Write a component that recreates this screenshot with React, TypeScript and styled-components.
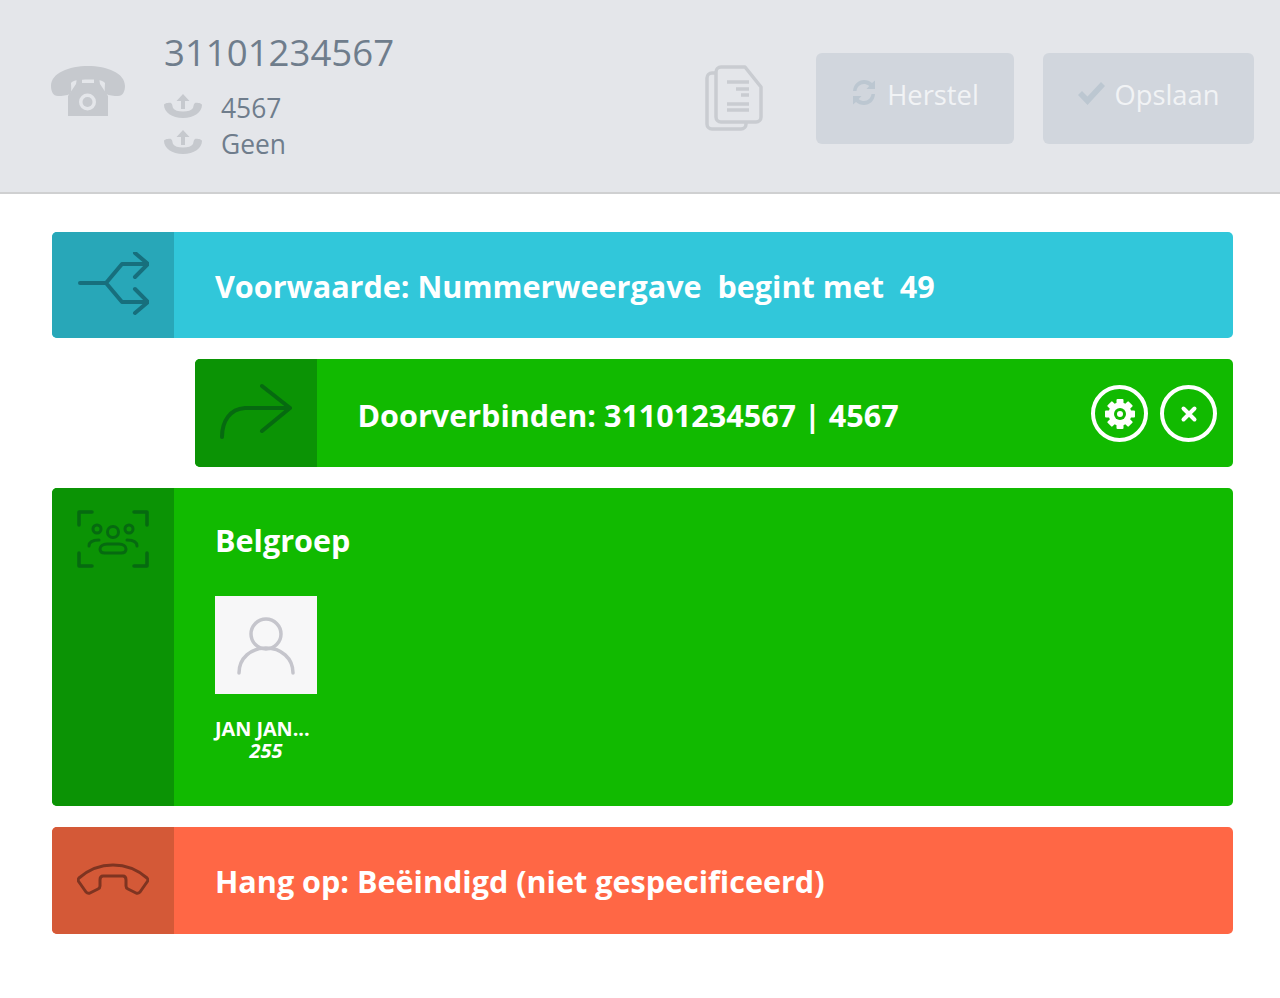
import React from "react";
import styled, { createGlobalStyle } from "styled-components";

const Global = createGlobalStyle`
  html, body { margin: 0; padding: 0; background: #fff; }
  body { font-family: "Open Sans", "Liberation Sans", sans-serif; }
  * { box-sizing: border-box; }
`;

const Page = styled.div`
  width: 1280px;
  height: 998px;
  overflow: hidden;
`;

const Header = styled.header`
  height: 194px;
  background: #e4e6ea;
  border-bottom: 2px solid #cfd0d1;
  display: flex;
  align-items: flex-start;
  padding-left: 51px;
`;

const PhoneBox = styled.div`
  width: 113px;
  padding-top: 66px;
  flex: none;
  line-height: 0;
`;

const Info = styled.div`
  width: 541px;
  flex: none;
  padding-top: 29px;
  color: #6f7d8c;
`;

const Number = styled.div`
  font-size: 36.6px;
  line-height: 46px;
  margin-bottom: 15px;
`;

const SubRow = styled.div`
  display: flex;
  align-items: center;
  gap: 19px;
  height: 36px;
  font-size: 26.4px;
`;

const SubIcon = styled.svg`
  margin-top: -4px;
  flex: none;
`;

const CopyBox = styled.div`
  width: 111px;
  flex: none;
  padding-top: 65px;
  line-height: 0;
`;

const ActionButton = styled.div<{ $w: number; $gap: number }>`
  width: ${(p) => p.$w}px;
  margin-right: ${(p) => p.$gap}px;
  flex: none;
  height: 91px;
  margin-top: 53px;
  border-radius: 6px;
  background: #d1d6dd;
  color: #f1f3f5;
  font-size: 27.3px;
  display: flex;
  justify-content: center;
  align-items: flex-start;
  gap: 10px;
  padding-top: 23px;
  line-height: 38px;
`;

const ButtonIcon = styled.svg<{ $top: number }>`
  margin-top: ${(p) => p.$top}px;
  flex: none;
`;

const Flow = styled.main`
  padding: 38px 47px 0 52px;
  display: flex;
  flex-direction: column;
  gap: 21px;
`;

const Block = styled.section<{ $bg: string; $h: number; $indent?: number }>`
  background: ${(p) => p.$bg};
  height: ${(p) => p.$h}px;
  margin-left: ${(p) => p.$indent ?? 0}px;
  border-radius: 5px;
  overflow: hidden;
  display: flex;
  position: relative;
`;

const Side = styled.div<{ $bg: string }>`
  width: 122px;
  flex: none;
  background: ${(p) => p.$bg};
  display: flex;
  justify-content: center;
  align-items: flex-start;
  line-height: 0;
`;

const IconSlot = styled.div<{ $top: number }>`
  padding-top: ${(p) => p.$top}px;
`;

const Title = styled.div<{ $top: number; $left?: number }>`
  color: #fff;
  font-weight: 700;
  font-size: 30.55px;
  line-height: 40px;
  white-space: pre;
  padding: ${(p) => p.$top}px 0 0 ${(p) => p.$left ?? 41}px;
`;

const Controls = styled.div`
  position: absolute;
  right: 16px;
  top: 26px;
  display: flex;
  gap: 12px;
`;

const RoundButton = styled.div`
  width: 57px;
  height: 57px;
  border: 4px solid #fff;
  border-radius: 50%;
  display: flex;
  align-items: center;
  justify-content: center;
  line-height: 0;
`;

const GroupBody = styled.div`
  padding: 32px 0 0 41px;
`;

const GroupTitle = styled.div`
  color: #fff;
  font-weight: 700;
  font-size: 30.55px;
  line-height: 40px;
  margin-bottom: 36px;
`;

const Member = styled.div`
  width: 102px;
  color: #fff;
  text-align: center;
`;

const Avatar = styled.div`
  width: 102px;
  height: 98px;
  background: #f7f7f8;
  display: flex;
  align-items: center;
  justify-content: center;
  line-height: 0;
  margin-bottom: 24px;
`;

const MemberName = styled.div`
  font-size: 19.8px;
  font-weight: 700;
  line-height: 22px;
  text-align: left;
  white-space: nowrap;
`;

const MemberExt = styled.div`
  font-size: 20px;
  font-weight: 700;
  font-style: italic;
  line-height: 22px;
`;

const TransferIcon = () => (
  <SubIcon width="38" height="24" viewBox="0 0 38 24">
    <path d="M0 11c0-1.500 5-2.500 7-2 1 .3 1.500 3 2 5 1.500 2.500 5 3.500 10 3.500s8.500-1 10-3.500c.5-2 1-4.700 2-5 2-.5 7 .5 7 2 0 7-8 13-19 13S0 18 0 11z" fill="#c6c9ce" />
    <path d="M19 0l6.500 7H21v8h-4V7h-4.500z" fill="#c6c9ce" />
  </SubIcon>
);

const teeth = [0, 45, 90, 135, 180, 225, 270, 315];

export default function App() {
  return (
    <Page>
      <Global />
      <Header>
        <PhoneBox>
          <svg width="74" height="50" viewBox="0 0 74 50">
            <path d="M37 0C18 0 0 7 0 20c0 5 2 10 7 10 4 0 9-.5 12-2 2-1.500 1-8 1-11 2-3 9-3.500 17-3.500S52 14 54 17c0 3-1 9.500 1 11 3 1.500 8 2 12 2 5 0 7-5 7-10C74 7 56 0 37 0z" fill="#c6c9ce" />
            <path d="M26 12h5v5h12v-5h5l1 6 8 12v20H17V30l8-12z" fill="#c6c9ce" />
            <circle cx="36.500" cy="36" r="8.500" fill="#e4e6ea" />
            <circle cx="36.500" cy="36" r="5" fill="#c6c9ce" />
          </svg>
        </PhoneBox>
        <Info>
          <Number>31101234567</Number>
          <SubRow><TransferIcon /><span>4567</span></SubRow>
          <SubRow><TransferIcon /><span>Geen</span></SubRow>
        </Info>
        <CopyBox>
          <svg width="60" height="66" viewBox="0 0 60 66" fill="none" stroke="#c9ccd1" strokeWidth="3.500" strokeLinejoin="round">
            <path d="M12 8H7a5 5 0 0 0-5 5v46a5 5 0 0 0 5 5h29a5 5 0 0 0 5-5v-2" />
            <path d="M16 2h24l16 20v30a5 5 0 0 1-5 5H16a5 5 0 0 1-5-5V7a5 5 0 0 1 5-5z" />
            <path d="M22 17h22M31 24h13M36 30h8M22 39h22M22 45h22" strokeWidth="3.500" />
          </svg>
        </CopyBox>
        <ActionButton $w={198} $gap={29}>
          <ButtonIcon $top={3} width="26" height="27" viewBox="0 0 24 27" fill="#bcc7d1">
            <path d="M1 12C1.500 5 6.500 1 12 1c3 0 6 1 8 3l3-2.500V10h-8.500l2.800-3C15 5.500 13.500 5 12 5 8 5 5 8 4.500 12zM23 15c-.5 7-5.500 11-11 11-3 0-6-1-8-3l-3 2.500V17h8.500l-2.800 3C8 21.500 10.500 22 12 22c4 0 7-3 7.500-7z" />
          </ButtonIcon>
          <span>Herstel</span>
        </ActionButton>
        <ActionButton $w={211} $gap={0}>
          <ButtonIcon $top={6} width="27" height="23" viewBox="0 0 27 23" fill="#bcc7d1">
            <path d="M0 13l4-4 5.500 5.500L23 0l4 4-17.500 19z" />
          </ButtonIcon>
          <span>Opslaan</span>
        </ActionButton>
      </Header>
      <Flow>
        <Block $bg="#31c7da" $h={106}>
          <Side $bg="#28a7b8">
            <IconSlot $top={20}>
              <svg width="72" height="64" viewBox="0 0 72 64" fill="none" stroke="#176f7d" strokeWidth="4" strokeLinecap="round" strokeLinejoin="round">
                <path d="M3 31h26L45 12h26M58 1l13 11-13 13M29 31l16 19h26M58 37l13 13-13 11" />
              </svg>
            </IconSlot>
          </Side>
          <Title $top={34}>{"Voorwaarde: Nummerweergave  begint met  49"}</Title>
        </Block>
        <Block $bg="#11ba00" $h={108} $indent={143}>
          <Side $bg="#0b9305">
            <IconSlot $top={24}>
              <svg width="74" height="56" viewBox="0 0 74 56" fill="none" stroke="#066a10" strokeWidth="4" strokeLinecap="round" strokeLinejoin="round">
                <path d="M3 54C3 38 11 26 26 25H71M43 3L71 25L43 48" />
              </svg>
            </IconSlot>
          </Side>
          <Title $top={36} $left={40.5}>{"Doorverbinden: 31101234567 | 4567"}</Title>
          <Controls>
            <RoundButton>
              <svg width="32" height="32" viewBox="-16 -16 32 32">
                {teeth.map((a) => (
                  <rect key={a} x="-3.500" y="-15" width="7" height="8" rx="1" fill="#fff" transform={`rotate(${a})`} />
                ))}
                <circle r="11.500" fill="#fff" />
                <circle r="6" fill="#11ba00" />
                <circle r="3" fill="#fff" />
              </svg>
            </RoundButton>
            <RoundButton>
              <svg width="18" height="18" viewBox="0 0 18 18" stroke="#fff" strokeWidth="4" strokeLinecap="round">
                <path d="M3.500 3.500l11 11M14.500 3.500l-11 11" />
              </svg>
            </RoundButton>
          </Controls>
        </Block>
        <Block $bg="#11ba00" $h={318}>
          <Side $bg="#0b9305">
            <IconSlot $top={22}>
              <svg width="72" height="58" viewBox="0 0 72 58" fill="none" stroke="#066a10" strokeWidth="3" strokeLinecap="round" strokeLinejoin="round">
                <path d="M2 15V2h13M57 2h13v13M2 43v13h13M57 56h13V43" strokeWidth="3.500" />
                <circle cx="36" cy="22" r="5.500" />
                <circle cx="20" cy="19" r="4" />
                <circle cx="52" cy="19" r="4" />
                <path d="M12 36c0-4 4-6 10-6M60 36c0-4-4-6-10-6" />
                <path d="M30 34h12c4 0 7 2 7 5s-2 4-5 4H28c-3 0-5-1-5-4s3-5 7-5z" />
              </svg>
            </IconSlot>
          </Side>
          <GroupBody>
            <GroupTitle>Belgroep</GroupTitle>
            <Member>
              <Avatar>
                <svg width="60" height="60" viewBox="0 0 60 60" fill="none" stroke="#c5c5cc" strokeWidth="3.500" strokeLinecap="round">
                  <circle cx="30" cy="19" r="15" />
                  <path d="M3 58C3 43 15 33 30 33s27 10 27 25" />
                </svg>
              </Avatar>
              <MemberName>JAN JAN...</MemberName>
              <MemberExt>255</MemberExt>
            </Member>
          </GroupBody>
        </Block>
        <Block $bg="#ff6745" $h={107}>
          <Side $bg="#d45937">
            <IconSlot $top={36}>
              <svg width="72" height="34" viewBox="0 0 72 34" fill="none" stroke="#7e3421" strokeWidth="3" strokeLinejoin="round">
                <path d="M36 2C22 2 10 8 2 15c-1 1-1 3 0 4l7 10c1 1 2 2 4 1l8-4c1-.5 2-2 2-3V17c0-2 1-4 3-4h20c2 0 3 2 3 4v6c0 1 1 2.500 2 3l8 4c2 1 3 0 4-1l7-10c1-1 1-3 0-4C62 8 50 2 36 2z" />
              </svg>
            </IconSlot>
          </Side>
          <Title $top={34}>{"Hang op: Beëindigd (niet gespecificeerd)"}</Title>
        </Block>
      </Flow>
    </Page>
  );
}
